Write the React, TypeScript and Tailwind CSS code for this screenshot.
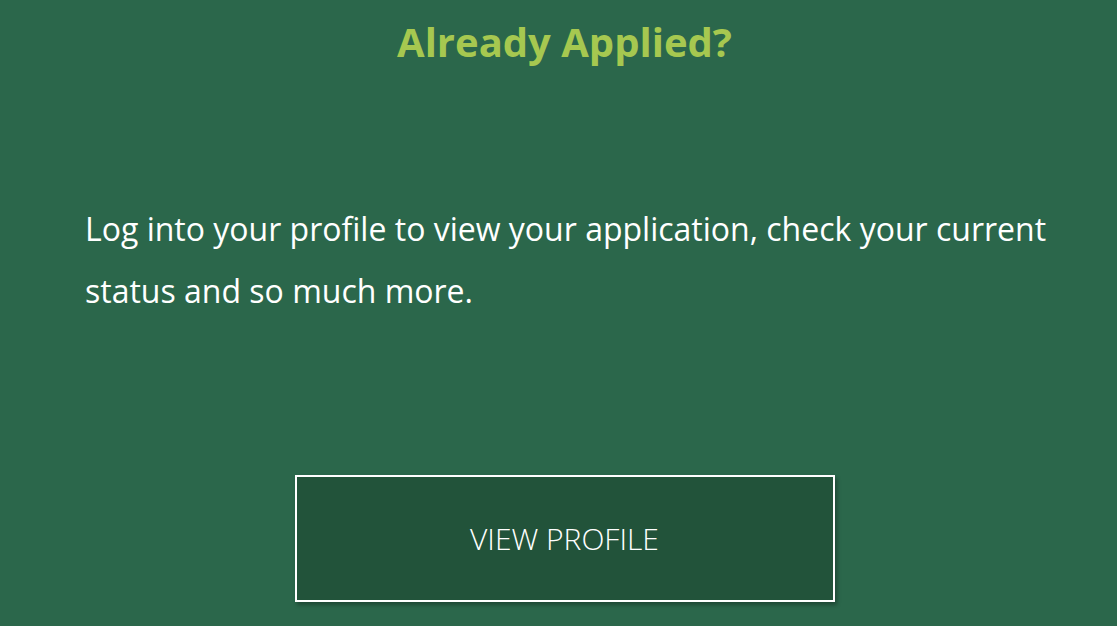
export default function App() {
  return (
    <div
      className="w-full h-[626px] bg-[#2b674b] flex flex-col overflow-hidden pl-[12px]"
      style={{ fontFamily: '"Open Sans", sans-serif' }}
    >
      <h1 className="mt-[18px] text-center text-[40px] leading-[48px] font-bold text-[#a6c850]">
        Already Applied?
      </h1>
      <p className="mt-[132px] ml-[73px] w-[1000px] text-[32px] leading-[62px] text-white">
        Log into your profile to view your application, check your current status and so much more.
      </p>
      <div className="mt-[153px] flex justify-center">
        <button className="w-[540px] h-[127px] border-2 border-white bg-[#22533a] text-white text-[30px] font-light shadow-[2px_3px_4px_rgba(0,0,0,0.3)]">
          VIEW PROFILE
        </button>
      </div>
    </div>
  );
}
